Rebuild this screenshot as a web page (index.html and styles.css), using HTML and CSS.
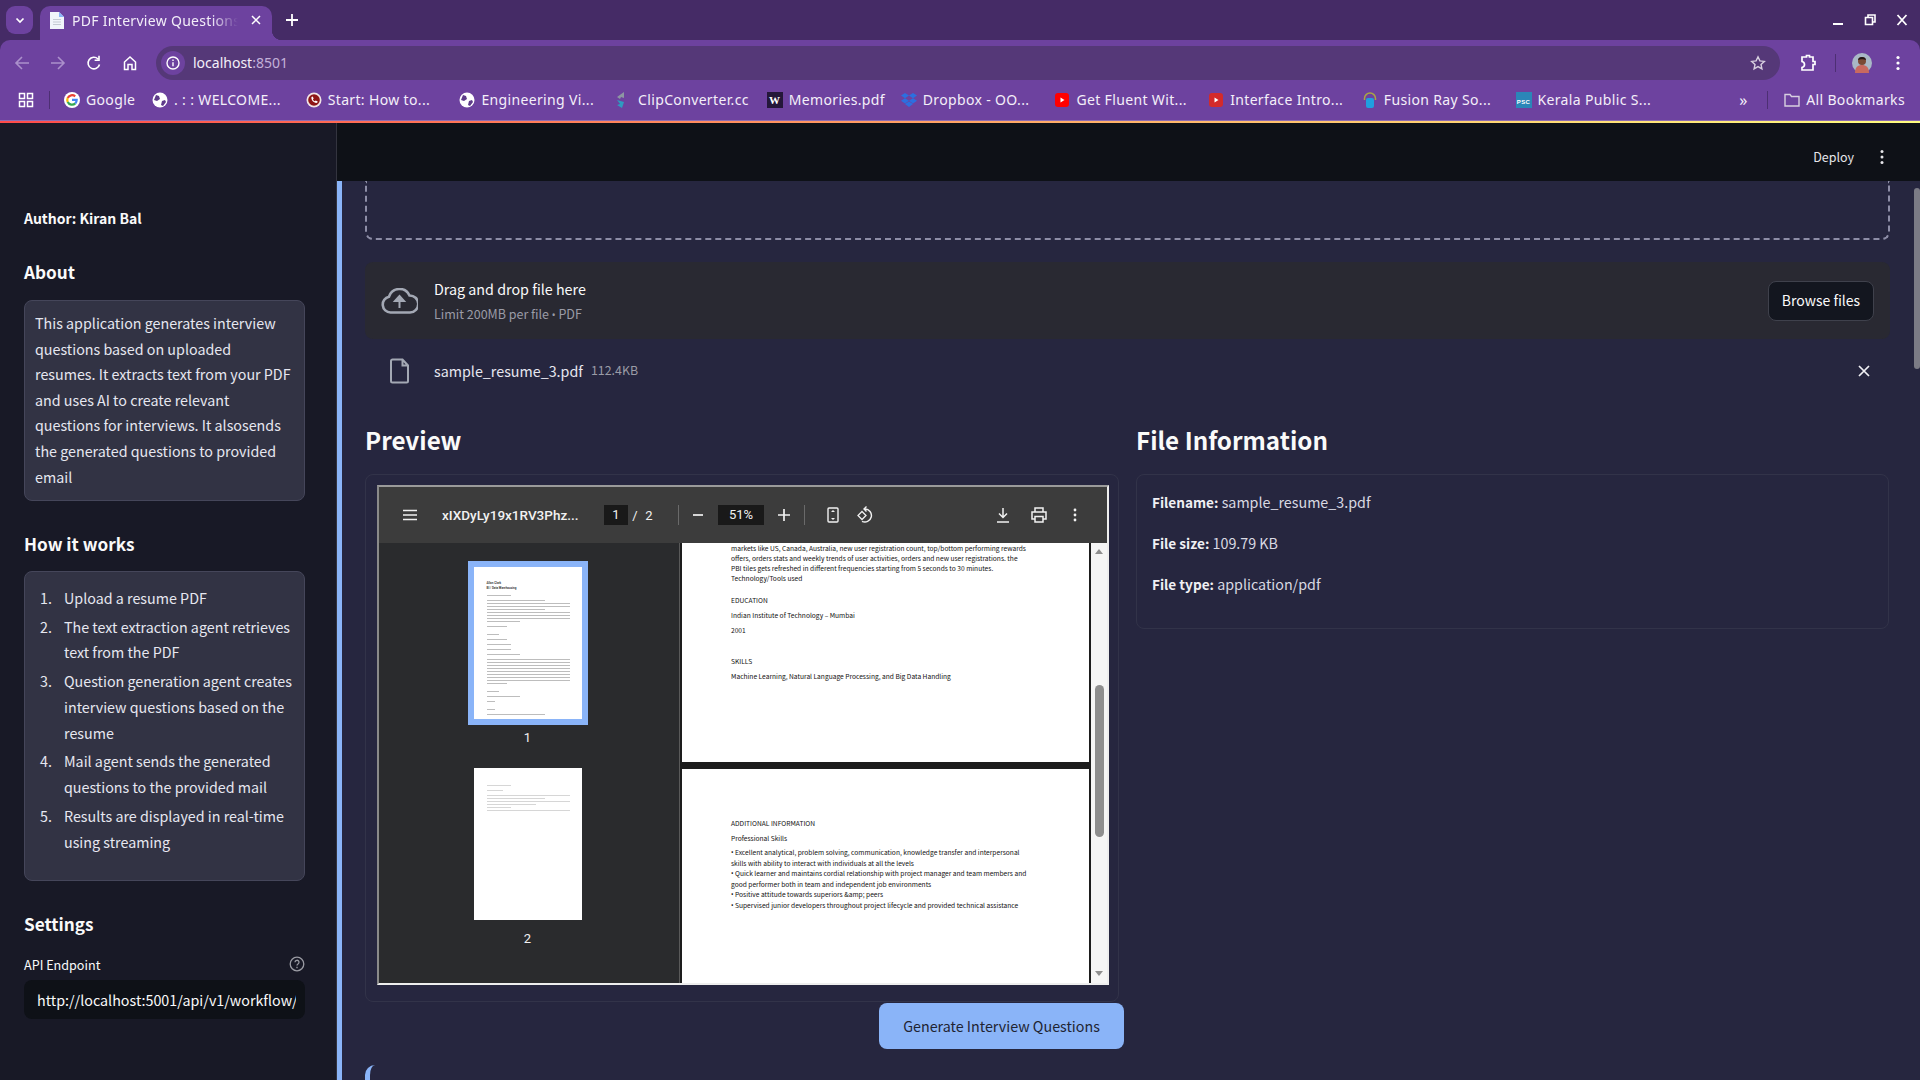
FILE: index.html
```html
<!DOCTYPE html>
<html lang="en">
<head>
  <meta charset="UTF-8">
  <title>PDF Interview Questions</title>
  <link rel="stylesheet" href="styles.css">
</head>
<body>
  <!-- browser chrome -->
  <div class="chrome">
    <div class="tabstrip">
      <div class="tab-search"><svg width="12" height="12" viewBox="0 0 12 12"><path d="M2.500 4.500L6 8l3.500-3.500" fill="none" stroke="#fff" stroke-width="1.700"/></svg></div>
      <div class="tab">
        <svg width="14" height="17" viewBox="0 0 14 17"><path d="M0 0h9l5 5v12H0z" fill="#f1f4fa"/><path d="M9 0l5 5H9z" fill="#8ab4f8"/><path d="M3 7.500h8M3 10h8M3 12.500h8" stroke="#c5cad3"/></svg>
        <span class="tab-title">PDF Interview Questions</span>
        <svg class="tab-close" width="10" height="10" viewBox="0 0 10 10"><path d="M1 1l8 8M9 1L1 9" stroke="#fff" stroke-width="1.500"/></svg>
      </div>
      <svg class="new-tab" width="12" height="12" viewBox="0 0 12 12"><path d="M0 6h12M6 0v12" stroke="#fff" stroke-width="1.800"/></svg>
      <div class="window-btns">
        <svg width="12" height="12" viewBox="0 0 12 12"><path d="M1 10h10" stroke="#fff" stroke-width="2"/></svg>
        <svg width="12" height="12" viewBox="0 0 12 12"><path d="M4 3V1h7v7H9M1.500 3.500h7v7h-7z" fill="none" stroke="#fff" stroke-width="1.600"/></svg>
        <svg width="12" height="12" viewBox="0 0 12 12"><path d="M1.500 1l9 10M10.500 1l-9 10" stroke="#fff" stroke-width="1.800"/></svg>
      </div>
    </div>
    <div class="toolbar">
      <svg class="nav-icon dim" width="16" height="16" viewBox="0 0 16 16"><path d="M15 8H2M8 2L2 8l6 6" fill="none" stroke="currentColor" stroke-width="1.600"/></svg>
      <svg class="nav-icon dim" width="16" height="16" viewBox="0 0 16 16"><path d="M1 8h13M8 2l6 6-6 6" fill="none" stroke="currentColor" stroke-width="1.600"/></svg>
      <svg class="nav-icon" width="16" height="16" viewBox="0 0 16 16"><path d="M13.500 9.500A5.800 5.800 0 1 1 12 4M13 .8v4.400H8.600" fill="none" stroke="currentColor" stroke-width="1.600"/></svg>
      <svg class="nav-icon" width="16" height="16" viewBox="0 0 16 16"><path d="M2.500 14.500V7L8 2l5.500 5v7.500H10V9.500H6v5z" fill="none" stroke="currentColor" stroke-width="1.500"/></svg>
      <div class="omnibox">
        <span class="site-info"><svg width="16" height="16" viewBox="0 0 16 16"><circle cx="8" cy="8" r="6" fill="none" stroke="#fff" stroke-width="1.400"/><path d="M8 7.200v4M8 4.500v1.400" stroke="#fff" stroke-width="1.400"/></svg></span>
        <span class="url">localhost<span class="url-port">:8501</span></span>
        <svg class="star" width="16" height="16" viewBox="0 0 16 16"><path d="M8 1.800l1.900 4.100 4.400.5-3.300 3 .9 4.400L8 11.600l-3.900 2.200.9-4.400-3.300-3 4.400-.5z" fill="none" stroke="#d8d0e0" stroke-width="1.400"/></svg>
      </div>
      <svg class="ext" width="18" height="18" viewBox="0 0 18 18"><path d="M3 3h4.500V1.500h3V3H14v4.500h2v3h-2V16H3v-2.500C5 13 5.500 12 5.500 10.500S5 8 3 7.500z" fill="none" stroke="#fff" stroke-width="1.700"/></svg>
      <span class="toolbar-sep"></span>
      <span class="avatar">
        <svg width="20" height="20" viewBox="0 0 20 20"><circle cx="10" cy="10" r="10" fill="#a9b8c6"/><path d="M3 20c0-6 3-8 7-8s7 2 7 8z" fill="#c9695f"/><circle cx="10" cy="8" r="4" fill="#7a4a35"/><path d="M6 7c0-4 8-4 8 0-2-1-6-1-8 0z" fill="#201614"/></svg>
      </span>
      <svg class="tool-more" width="4" height="16" viewBox="0 0 4 16"><circle cx="2" cy="2.500" r="1.600" fill="#fff"/><circle cx="2" cy="8" r="1.600" fill="#fff"/><circle cx="2" cy="13.500" r="1.600" fill="#fff"/></svg>
    </div>
    <div class="bookmarks">
      <svg class="apps" width="16" height="16" viewBox="0 0 16 16"><path d="M1.500 1.500h5v5h-5zM9.500 1.500h5v5h-5zM1.500 9.500h5v5h-5zM9.500 9.500h5v5h-5z" fill="none" stroke="#fff" stroke-width="1.500"/></svg>
      <span class="bm-sep"></span>
      <div class="bm bm-google">
        <svg class="fav" width="16" height="16" viewBox="0 0 16 16"><circle cx="8" cy="8" r="8" fill="#fff"/><path d="M3.700 6a4.800 4.800 0 0 1 7.500-1.600" fill="none" stroke="#ea4335" stroke-width="2.200"/><path d="M3.700 10a4.800 4.800 0 0 1 0-4" fill="none" stroke="#fbbc05" stroke-width="2.200"/><path d="M11.300 11.400A4.800 4.800 0 0 1 3.700 10" fill="none" stroke="#34a853" stroke-width="2.200"/><path d="M8 7.800h4.700a5 5 0 0 1-1.400 3.600" fill="none" stroke="#4285f4" stroke-width="2.200"/></svg>
        <span>Google</span>
      </div>
      <div class="bm">
        <svg class="fav" width="16" height="16" viewBox="0 0 16 16"><circle cx="8" cy="8" r="7.500" fill="#fff"/><path d="M4 3l3 1 1 3-3 2-3-1zM10 9l3-1 1 2-3 4-2-1z" fill="#5e3b8a"/></svg>
        <span>. : : WELCOME...</span>
      </div>
      <div class="bm">
        <svg class="fav" width="16" height="16" viewBox="0 0 16 16"><circle cx="8" cy="8" r="7.500" fill="#f2e6e6"/><circle cx="8" cy="8" r="5.800" fill="#8e1616"/><path d="M5.500 5l1.200-.5 1 2-.8.800c.4 1 1 1.600 2 2l.8-.8 2 1-.5 1.300c-3 .8-6.500-2.800-5.700-5.800z" fill="#fff"/></svg>
        <span>Start: How to...</span>
      </div>
      <div class="bm">
        <svg class="fav" width="16" height="16" viewBox="0 0 16 16"><circle cx="8" cy="8" r="7.500" fill="#fff"/><path d="M4 3l3 1 1 3-3 2-3-1zM10 9l3-1 1 2-3 4-2-1z" fill="#5e3b8a"/></svg>
        <span>Engineering Vi...</span>
      </div>
      <div class="bm bm-clip">
        <svg class="fav" width="16" height="16" viewBox="0 0 16 16"><path d="M11 0L4 5l3 2 1-2 3 1z" fill="#8d97a3"/><path d="M4 8l7 2-2 6-5-3 3-1z" fill="#2f9bc0"/></svg>
        <span>ClipConverter.cc</span>
      </div>
      <div class="bm bm-mem">
        <span class="fav fav-w">W</span>
        <span>Memories.pdf</span>
      </div>
      <div class="bm">
        <svg class="fav" width="16" height="16" viewBox="0 0 16 16"><path d="M4 1l4 2.600L4 6.200 0 3.600zM12 1l4 2.600-4 2.600-4-2.600zM4 6.200l4 2.600-4 2.600-4-2.600zM12 6.200l4 2.600-4 2.600-4-2.600zM4 12l4-2.500 4 2.500-4 3z" fill="#2c6fe0"/></svg>
        <span>Dropbox - OO...</span>
      </div>
      <div class="bm">
        <svg class="fav" width="16" height="16" viewBox="0 0 16 16"><rect x="1" y="1" width="14" height="14" rx="3" fill="#f00"/><path d="M6.500 5.500l4 2.500-4 2.500z" fill="#fff"/></svg>
        <span>Get Fluent Wit...</span>
      </div>
      <div class="bm">
        <svg class="fav" width="16" height="16" viewBox="0 0 16 16"><rect x="1" y="1" width="14" height="14" rx="3" fill="#d32a2a"/><path d="M6.500 5.500l4 2.500-4 2.500z" fill="#fff"/></svg>
        <span>Interface Intro...</span>
      </div>
      <div class="bm">
        <svg class="fav" width="16" height="16" viewBox="0 0 16 16"><path d="M2.500 8V6.500a5.500 5.500 0 0 1 11 0V8" fill="none" stroke="#a9a545" stroke-width="1.500"/><rect x="4" y="6" width="8" height="10" rx="2" fill="#1f9fe0"/></svg>
        <span>Fusion Ray So...</span>
      </div>
      <div class="bm">
        <span class="fav fav-psc">PSC</span>
        <span>Kerala Public S...</span>
      </div>
      <span class="bm-more">»</span>
      <span class="bm-sep last"></span>
      <div class="bm-all">
        <svg width="16" height="14" viewBox="0 0 16 14"><path d="M1 1.500h5l1.500 2H15v9.500H1z" fill="none" stroke="#d8d0e0" stroke-width="1.400"/></svg>
        <span>All Bookmarks</span>
      </div>
    </div>
  </div>
  <div class="load-line"></div>

  <!-- streamlit app -->
  <div class="app">
    <aside class="sidebar">
      <p class="author">Author: Kiran Bal</p>
      <h3 class="side-head about-head">About</h3>
      <div class="side-card about-card">This application generates interview questions based on uploaded resumes. It extracts text from your PDF and uses AI to create relevant questions for interviews. It alsosends the generated questions to provided email</div>
      <h3 class="side-head">How it works</h3>
      <div class="side-card steps">
        <ol>
          <li>Upload a resume PDF</li>
          <li>The text extraction agent retrieves text from the PDF</li>
          <li>Question generation agent creates interview questions based on the resume</li>
          <li>Mail agent sends the generated questions to the provided mail</li>
          <li>Results are displayed in real-time using streaming</li>
        </ol>
      </div>
      <h3 class="side-head settings-head">Settings</h3>
      <div class="field-label">
        <span>API Endpoint</span>
        <svg width="16" height="16" viewBox="0 0 16 16"><circle cx="8" cy="8" r="6.800" fill="none" stroke="#9a9ba3" stroke-width="1.300"/><path d="M6 6.300a2 2 0 1 1 3 1.700c-.7.400-1 .8-1 1.600M8 10.800v1.400" fill="none" stroke="#9a9ba3" stroke-width="1.300"/></svg>
      </div>
      <div class="text-input"><span>http://localhost:5001/api/v1/workflow/generate</span></div>
    </aside>

    <div class="content">
      <header class="app-header">
        <span class="deploy">Deploy</span>
        <svg width="4" height="16" viewBox="0 0 4 16"><circle cx="2" cy="2.500" r="1.500" fill="#e6e6ea"/><circle cx="2" cy="8" r="1.500" fill="#e6e6ea"/><circle cx="2" cy="13.500" r="1.500" fill="#e6e6ea"/></svg>
      </header>
      <main class="main">
        <div class="dashed-box"></div>

        <div class="uploader">
          <svg class="cloud" width="37" height="26" viewBox="0 0 37 26"><path d="M9.500 24.500a8 8 0 0 1-1.500-15.800A11 11 0 0 1 28.500 7.500a8.500 8.500 0 0 1 .5 17z" fill="none" stroke="#a3a8b4" stroke-width="2.600"/><path d="M18.500 20v-7M14 13l4.500-5 4.500 5z" fill="#a3a8b4" stroke="#a3a8b4" stroke-width="2"/></svg>
          <div class="uploader-text">
            <div class="drop-title">Drag and drop file here</div>
            <div class="drop-limit">Limit 200MB per file <span class="dot">•</span> PDF</div>
          </div>
          <button class="browse">Browse files</button>
        </div>

        <div class="file-row">
          <svg width="20" height="26" viewBox="0 0 20 26"><path d="M2.500 1.500h10l5.500 6v15.500a1.500 1.500 0 0 1-1.500 1.500h-14A1.500 1.500 0 0 1 1 23V3a1.500 1.500 0 0 1 1.500-1.500zM12.500 1.500v6H18" fill="none" stroke="#a3a8b4" stroke-width="2"/></svg>
          <span class="file-name">sample_resume_3.pdf</span>
          <span class="file-size">112.4KB</span>
          <svg class="file-x" width="12" height="12" viewBox="0 0 12 12"><path d="M1 1l10 10M11 1L1 11" stroke="#f0f0f4" stroke-width="1.700"/></svg>
        </div>

        <div class="columns">
          <section>
            <h2 class="sec-head">Preview</h2>
            <div class="card pdf-card">
              <div class="pdf-frame">
                <div class="pdf-bar">
                  <svg class="pdf-menu" width="16" height="12" viewBox="0 0 16 12"><path d="M1 1.500h14M1 6h14M1 10.500h14" stroke="#f1f1f1" stroke-width="1.700"/></svg>
                  <span class="pdf-name">xIXDyLy19x1RV3Phz...</span>
                  <span class="pdf-num">1</span>
                  <span class="pdf-slash">/</span>
                  <span class="pdf-total">2</span>
                  <span class="pdf-sep first"></span>
                  <svg class="pdf-minus" width="12" height="12" viewBox="0 0 12 12"><path d="M1 6h10" stroke="#f1f1f1" stroke-width="1.700"/></svg>
                  <span class="pdf-zoom">51%</span>
                  <svg class="pdf-plus" width="12" height="12" viewBox="0 0 12 12"><path d="M0 6h12M6 0v12" stroke="#f1f1f1" stroke-width="1.700"/></svg>
                  <span class="pdf-sep"></span>
                  <svg class="pdf-fit" width="12" height="16" viewBox="0 0 12 16"><rect x="1" y="1" width="10" height="14" rx="1" fill="none" stroke="#f1f1f1" stroke-width="1.400"/><path d="M6 3l2 2H4zM6 13l2-2H4z" fill="#f1f1f1"/></svg>
                  <svg class="pdf-rotate" width="18" height="18" viewBox="0 0 18 18"><path d="M9 3a6.500 6.500 0 1 1-3 12.300M10.500 .5L8 3l2.500 2.500" fill="none" stroke="#f1f1f1" stroke-width="1.400"/><path d="M6 5.500L2 9.500l4 4 4-4z" fill="#3c3c3c" stroke="#f1f1f1" stroke-width="1.300"/></svg>
                  <svg class="pdf-download" width="14" height="16" viewBox="0 0 14 16"><path d="M7 1v9M3 6.500L7 10.500l4-4M1 15h12" fill="none" stroke="#f1f1f1" stroke-width="1.500"/></svg>
                  <svg class="pdf-print" width="16" height="16" viewBox="0 0 16 16"><path d="M4 4.500V1h8v3.500M4 12H1V5h14v7h-3M4 9.500h8V15H4z" fill="none" stroke="#f1f1f1" stroke-width="1.500"/></svg>
                  <svg class="pdf-more" width="4" height="14" viewBox="0 0 4 14"><circle cx="2" cy="2" r="1.400" fill="#f1f1f1"/><circle cx="2" cy="7" r="1.400" fill="#f1f1f1"/><circle cx="2" cy="12" r="1.400" fill="#f1f1f1"/></svg>
                </div>
                <div class="pdf-body">
                  <div class="thumbs">
                    <div class="thumb current">
                      <div class="thumb-page">
                        <b>Allan Clark</b>
                        <b>BI / Data Warehousing</b>
                        <i class="gap w30"></i>
                        <i class="gap w70"></i><i class="w85"></i><i class="w85"></i><i class="w70"></i><i class="w85"></i><i class="w85"></i><i class="w85"></i><i class="w40"></i>
                        <i class="gap w25"></i>
                        <i class="gap-lg w15"></i><i class="gap w25"></i><i class="gap w30"></i><i class="gap w30"></i><i class="gap w40"></i>
                        <i class="gap w85"></i><i class="w85"></i><i class="w85"></i><i class="w85"></i><i class="w85"></i><i class="w85"></i><i class="w85"></i><i class="w85"></i><i class="w25"></i>
                        <i class="gap-lg w15"></i><i class="gap w40"></i><i class="gap w10"></i>
                        <i class="gap-lg w10"></i><i class="gap w70"></i>
                      </div>
                    </div>
                    <div class="thumb-num">1</div>
                    <div class="thumb-page second">
                      <i class="w30"></i><i class="gap w20"></i>
                      <i class="gap w85"></i><i class="w70"></i><i class="w85"></i><i class="w60"></i><i class="w30"></i><i class="w85"></i>
                    </div>
                    <div class="thumb-num last-num">2</div>
                  </div>
                  <div class="pages">
                    <div class="page page-one">
                      <p class="para">markets like US, Canada, Australia, new user registration count, top/bottom performing rewards<br>offers, orders stats and weekly trends of user activities, orders and new user registrations. the<br>PBI tiles gets refreshed in different frequencies starting from 5 seconds to 30 minutes.<br>Technology/Tools used</p>
                      <p class="edu">EDUCATION</p>
                      <p class="next">Indian Institute of Technology – Mumbai</p>
                      <p class="next">2001</p>
                      <p class="skills">SKILLS</p>
                      <p class="next">Machine Learning, Natural Language Processing, and Big Data Handling</p>
                    </div>
                    <div class="page page-two">
                      <p>ADDITIONAL INFORMATION</p>
                      <p class="next">Professional Skills</p>
                      <p class="para bullets"><span class="dot">•</span> Excellent analytical, problem solving, communication, knowledge transfer and interpersonal<br>skills with ability to interact with individuals at all the levels<br><span class="dot">•</span> Quick learner and maintains cordial relationship with project manager and team members and<br>good performer both in team and independent job environments<br><span class="dot">•</span> Positive attitude towards superiors &amp;amp; peers<br><span class="dot">•</span> Supervised junior developers throughout project lifecycle and provided technical assistance</p>
                    </div>
                  </div>
                  <div class="pdf-scroll">
                    <span class="arrow-up"></span>
                    <span class="pdf-scrollbar"></span>
                    <span class="arrow-down"></span>
                  </div>
                </div>
              </div>
            </div>
          </section>
          <section>
            <h2 class="sec-head">File Information</h2>
            <div class="card info-card">
              <p><b>Filename:</b> sample_resume_3.pdf</p>
              <p><b>File size:</b> 109.79 KB</p>
              <p><b>File type:</b> application/pdf</p>
            </div>
          </section>
        </div>

        <div class="actions"><button class="generate">Generate Interview Questions</button></div>
        <div class="next-block"></div>
        <div class="page-scroll"></div>
      </main>
    </div>
  </div>
</body>
</html>
```

FILE: styles.css
```css
* {
  box-sizing: border-box;
}
html, body {
  margin: 0;
  height: 100%;
  overflow: hidden;
}
/* the CJK family's latin glyphs are drawn larger, so sizes are a bit under the usual 16px */
body {
  display: flex;
  flex-direction: column;
  background: #26263f;
  font-family: "Noto Sans CJK SC", "Noto Sans", sans-serif;
  font-size: 14.3px;
  color: #fafafa;
}
p, h2, h3 {
  margin: 0;
}
button {
  font-family: inherit;
  font-size: 14.3px;
}

/* browser chrome */
.chrome {
  flex: none;
  background: #452b66;
  font-family: "Noto Sans", sans-serif;
  font-size: 14px;
}
.tabstrip {
  height: 40px;
  display: flex;
  align-items: flex-end;
  padding-left: 6px;
}
.tab-search {
  width: 27px;
  height: 28px;
  margin-bottom: 6px;
  background: #6d429f;
  border-radius: 9px;
  display: flex;
  align-items: center;
  justify-content: center;
}
.tab {
  position: relative;
  width: 232px;
  height: 34px;
  margin-left: 7px;
  padding: 0 11px 6px 10px;
  background: #6d429f;
  border-radius: 10px 10px 0 0;
  display: flex;
  align-items: center;
  color: #f2edf8;
}
.tab::after {
  content: "";
  position: absolute;
  right: -10px;
  bottom: 0;
  width: 10px;
  height: 10px;
  background: radial-gradient(circle at 100% 0, transparent 10px, #6d429f 10.5px);
}
.tab svg {
  flex: none;
}
.tab-title {
  margin-left: 8px;
  width: 166px;
  overflow: hidden;
  white-space: nowrap;
  font-size: 14px;
  letter-spacing: .3px;
  -webkit-mask-image: linear-gradient(90deg, #000 84%, transparent 100%);
  mask-image: linear-gradient(90deg, #000 84%, transparent 100%);
}
.tab-close {
  margin-left: auto;
}
.new-tab {
  margin: 0 0 14px 14px;
}
.window-btns {
  margin: 0 12px 14px auto;
  display: flex;
  gap: 20px;
}

.toolbar {
  height: 40px;
  padding: 6px 0 0 14px;
  background: #6d429f;
  border-radius: 10px 10px 0 0;
  display: flex;
  align-items: center;
}
.nav-icon {
  color: #fff;
  margin-left: 20px;
  flex: none;
}
.nav-icon:first-child {
  margin-left: 0;
}
.nav-icon.dim {
  color: #ab90cb;
}
.omnibox {
  width: 1624px;
  height: 34px;
  margin-left: 18px;
  background: #553878;
  border-radius: 17px;
  display: flex;
  align-items: center;
}
.site-info {
  width: 24px;
  height: 24px;
  margin-left: 5px;
  border-radius: 50%;
  background: #6d429f;
  display: flex;
  align-items: center;
  justify-content: center;
}
.url {
  margin: 0 0 2px 8px;
  color: #f4eff9;
}
.url-port {
  color: #c3b1d8;
}
.star {
  margin: 0 14px 0 auto;
}
.ext {
  margin-left: 19px;
}
.toolbar-sep {
  width: 1px;
  height: 18px;
  margin-left: 18px;
  background: #4d2f73;
}
.avatar {
  width: 20px;
  height: 20px;
  margin-left: 16px;
  display: flex;
}
.tool-more {
  margin-left: 24px;
}

.bookmarks {
  height: 41px;
  padding: 0 0 1px 18px;
  background: #6d429f;
  border-bottom: 1px solid #8c6db3;
  display: flex;
  align-items: center;
  color: #f4eff9;
  letter-spacing: .35px;
}
.apps {
  flex: none;
}
.bm-sep {
  width: 1px;
  height: 18px;
  margin: 0 14px 0 15px;
  background: #4d2f73;
  flex: none;
}
.bm-sep.last {
  margin: 0 16px 0 16px;
}
.bm {
  width: 153.700px;
  display: flex;
  align-items: center;
  gap: 6px;
  flex: none;
  white-space: nowrap;
}
.bm-google {
  width: 88px;
}
.bm-clip {
  gap: 9px;
}
.bm-mem {
  width: 134px;
}
.fav {
  width: 16px;
  height: 16px;
  flex: none;
}
.fav-w {
  background: #24173a;
  color: #fff;
  font: bold 11px/16px "Liberation Serif", serif;
  text-align: center;
}
.fav-psc {
  background: #2b86b8;
  color: #fff;
  font: bold 6px/20px "Liberation Sans", sans-serif;
  text-align: center;
  overflow: hidden;
}
.bm-more {
  margin-left: 70px;
  width: 12px;
  font-size: 16px;
  line-height: 16px;
}
.bm-all {
  display: flex;
  align-items: center;
  gap: 6px;
  white-space: nowrap;
}
.load-line {
  flex: none;
  height: 2px;
  background: linear-gradient(90deg, #ff4b4b, #fffd80);
}

/* app layout */
.app {
  flex: 1;
  min-height: 0;
  display: flex;
}
.sidebar {
  width: 337px;
  flex: none;
  padding: 82px 31px 0 24px;
  background: #181926;
  border-right: 1px solid #33343f;
}
.author {
  font-size: 14px;
  font-weight: 700;
  line-height: 26px;
}
.side-head {
  margin: 31px 0 15px;
  font-size: 17.2px;
  font-weight: 700;
  line-height: 24px;
}
.about-head {
  margin: 29px 0 16px;
}
.settings-head {
  margin-bottom: 18px;
}
.side-card {
  padding: 9px 10px 10px;
  background: #323344;
  border: 1px solid #45465a;
  border-radius: 8px;
  color: #e6e7f0;
  line-height: 25.6px;
}
.about-card {
  height: 201px;
}
.steps {
  height: 310px;
  padding-top: 13px;
}
.steps ol {
  margin: 0;
  padding: 0;
  list-style: none;
  counter-reset: step;
}
.steps li {
  display: flex;
  margin-bottom: 3.300px;
  counter-increment: step;
}
.steps li::before {
  content: counter(step) ".";
  flex: none;
  width: 17px;
  margin-right: 12px;
  text-align: right;
}
.field-label {
  height: 20px;
  font-size: 12.600px;
  display: flex;
  align-items: center;
  justify-content: space-between;
}
.text-input {
  height: 39px;
  margin-top: 6px;
  padding: 0 9px 0 13px;
  background: #0e1117;
  border-radius: 8px;
  line-height: 40px;
}
.text-input span {
  display: block;
  overflow: hidden;
  white-space: nowrap;
}

.content {
  flex: 1;
  min-width: 0;
  display: flex;
  flex-direction: column;
}
.app-header {
  height: 58px;
  flex: none;
  background: #0e1117;
  padding: 10px 36px 0 0;
  display: flex;
  align-items: center;
  justify-content: flex-end;
  gap: 26px;
}
.deploy {
  margin-bottom: 2px;
  font-size: 12.500px;
  color: #e6e6ea;
}
.main {
  position: relative;
  flex: 1;
  min-height: 0;
  overflow: hidden;
  padding: 0 30px 0 23px;
  border-left: 5px solid #8ab4f8;
  background: #26263f;
}
.dashed-box {
  height: 59px;
  border: 2px dashed #8d8da6;
  border-top: 0;
  border-radius: 0 0 8px 8px;
}

/* uploader */
.uploader {
  height: 77px;
  margin-top: 22px;
  padding: 0 16px;
  background: #292932;
  border-radius: 8px;
  display: flex;
  align-items: center;
}
.cloud {
  flex: none;
}
.uploader-text {
  margin-left: 16px;
}
.drop-title {
  line-height: 26px;
}
.drop-limit {
  margin-top: 2px;
  font-size: 12.500px;
  line-height: 20px;
  color: #9a9ba6;
}
.dot {
  font-family: "Noto Sans", sans-serif;
  font-size: 10px;
}
.browse {
  width: 106px;
  height: 40px;
  padding-bottom: 3px;
  margin-left: auto;
  background: #13161f;
  border: 1px solid #3f414c;
  border-radius: 8px;
  color: #fafafa;
  font-size: 14px;
}
.file-row {
  height: 64px;
  padding: 0 20px 0 25px;
  display: flex;
  align-items: center;
}
.file-name {
  margin: 0 0 2px 24px;
  color: #e6e7f0;
}
.file-size {
  margin: 0 0 2px 8px;
  font-size: 12.400px;
  color: #9a9ba6;
}
.file-x {
  margin-left: auto;
}

/* preview and info */
.columns {
  margin-top: 20px;
  display: grid;
  grid-template-columns: 754px 753px;
  gap: 17px;
}
.sec-head {
  font-size: 24.200px;
  font-weight: 700;
  line-height: 34px;
  margin-bottom: 17px;
}
.card {
  border: 1px solid #323349;
  border-radius: 8px;
}
.pdf-card {
  height: 528px;
  padding: 10px 10px 0 11px;
}
.info-card {
  height: 155px;
  padding: 14px 15px;
  color: #d9d9e2;
}
.info-card p {
  line-height: 25.6px;
  margin-bottom: 14.500px;
}
.info-card b {
  font-size: 13.600px;
  color: #f0f0f4;
}

.pdf-frame {
  width: 732px;
  height: 500px;
  border: 2px solid;
  border-color: #9a9a9a #eeeeee #eeeeee #8a8a8a;
  display: flex;
  flex-direction: column;
  font-family: Roboto, sans-serif;
  font-size: 13px;
  color: #f1f1f1;
}
.pdf-bar {
  height: 56px;
  flex: none;
  padding-left: 23px;
  background: #3c3c3c;
  display: flex;
  align-items: center;
}
.pdf-bar svg {
  flex: none;
}
.pdf-name {
  width: 140px;
  margin-left: 24px;
  font-size: 13.500px;
  font-weight: 500;
  white-space: nowrap;
}
.pdf-num {
  width: 24px;
  height: 20px;
  margin-left: 22px;
  background: #191919;
  text-align: center;
  line-height: 20px;
}
.pdf-slash, .pdf-total {
  width: 14px;
  text-align: center;
}
.pdf-sep {
  width: 1px;
  height: 20px;
  margin-left: 14px;
  background: #6a6a6a;
}
.pdf-sep.first {
  margin-left: 22px;
}
.pdf-minus {
  margin-left: 13px;
}
.pdf-zoom {
  width: 46px;
  height: 20px;
  margin-left: 14px;
  background: #191919;
  text-align: center;
  line-height: 20px;
}
.pdf-plus {
  margin-left: 14px;
}
.pdf-fit {
  margin-left: 22px;
}
.pdf-rotate {
  margin-left: 17px;
}
.pdf-download {
  margin-left: 122px;
}
.pdf-print {
  margin-left: 21px;
}
.pdf-more {
  margin-left: 26px;
}
.pdf-body {
  flex: 1;
  min-height: 0;
  display: flex;
  background: #1d1d1d;
}
.thumbs {
  width: 301px;
  flex: none;
  background: #2a2b2d;
  border-right: 1px solid #5a5a5a;
  display: flex;
  flex-direction: column;
  align-items: center;
  padding-top: 18px;
  padding-right: 3px;
}
.thumb {
  padding: 6px;
  background: #8ab4f8;
}
.thumb-page {
  width: 108px;
  height: 152px;
  padding: 14px 12px 0 13px;
  background: #fff;
  display: flex;
  flex-direction: column;
}
.thumb-page b {
  font-size: 3px;
  line-height: 5px;
  color: #444;
  white-space: nowrap;
}
.thumb-page i {
  display: block;
  height: 1px;
  margin-top: 2px;
  background: #bdbdbd;
}
.thumb-page i.gap {
  margin-top: 4px;
}
.thumb-page i.gap-lg {
  margin-top: 7px;
}
.second {
  padding-top: 15px;
}
.second i {
  background: #d6d6d6;
}
.w10 { width: 10%; }
.w15 { width: 15%; }
.w20 { width: 20%; }
.w25 { width: 25%; }
.w30 { width: 30%; }
.w40 { width: 40%; }
.w60 { width: 60%; }
.w70 { width: 70%; }
.w85 { width: 100%; }
.thumb-num {
  height: 43px;
  padding-top: 5px;
  text-align: center;
  line-height: 16px;
}
.last-num {
  padding-top: 11px;
}
.pages {
  flex: 1;
  min-width: 0;
  padding: 0 2px;
  background: #1d1d1d;
}
.page {
  background: #fff;
  color: #111;
  font-family: "Noto Sans CJK SC", sans-serif;
  font-size: 6.650px;
  line-height: 10px;
  padding-left: 49px;
  white-space: nowrap;
  overflow: hidden;
}
.page .dot {
  font-size: 6.650px;
}
.page-one {
  height: 219px;
}
.page-two {
  height: 214px;
  margin-top: 7px;
  padding-top: 49px;
}
.edu {
  margin-top: 12px;
}
.next {
  margin-top: 5px;
}
.skills {
  margin-top: 21px;
}
.bullets {
  margin-top: 4px;
}
.pdf-scroll {
  position: relative;
  width: 16px;
  flex: none;
  background: #f5f5f5;
}
.pdf-scrollbar {
  position: absolute;
  left: 4px;
  top: 142px;
  width: 9px;
  height: 152px;
  border-radius: 5px;
  background: #8e8e8e;
}
.arrow-up, .arrow-down {
  position: absolute;
  left: 4px;
  width: 0;
  height: 0;
  border-left: 4.500px solid transparent;
  border-right: 4.500px solid transparent;
}
.arrow-up {
  top: 6px;
  border-bottom: 5px solid #8e8e8e;
}
.arrow-down {
  bottom: 7px;
  border-top: 5px solid #8e8e8e;
}

/* actions */
.actions {
  padding-left: 514px;
  margin-top: 1px;
}
.generate {
  width: 245px;
  height: 46px;
  padding-bottom: 3px;
  background: #8ab4f8;
  border: 0;
  border-radius: 8px;
  color: #1f2433;
}
.next-block {
  width: 30px;
  height: 40px;
  margin-top: 16px;
  border-left: 5px solid #8ab4f8;
  border-radius: 10px 0 0 0;
}
.page-scroll {
  position: absolute;
  right: 0;
  top: 7px;
  width: 6px;
  height: 181px;
  border-radius: 3px;
  background: #7b7b85;
}
```
